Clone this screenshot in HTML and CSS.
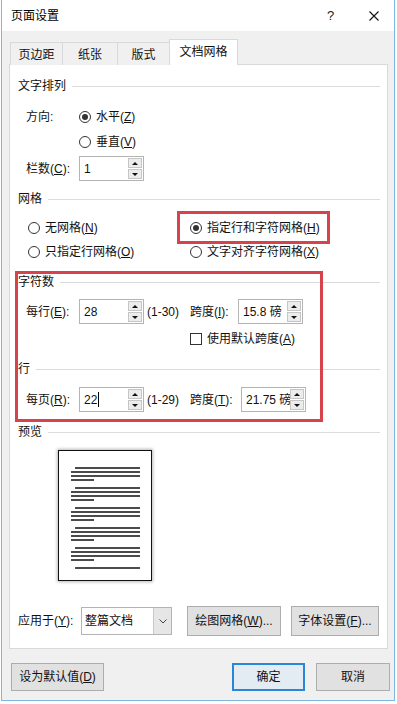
FILE: index.html
```html
<!DOCTYPE html>
<html>
<head>
	<meta charset="utf-8">
	<title>页面设置</title>
	<link rel="stylesheet" href="styles.css">
</head>
<body>
	<div class="dialog">
		<div class="titlebar">
			<span class="title">页面设置</span>
			<span class="help">?</span>
			<span class="close"><svg width="10" height="10" viewBox="0 0 10 10"><path d="M0.5 0.5L9.5 9.5M9.5 0.5L0.5 9.5" stroke="#111" stroke-width="1.1"/></svg></span>
		</div>
		<div class="body">
			<div class="tabs">
				<div class="tab t1">页边距</div>
				<div class="tab t2">纸张</div>
				<div class="tab t3">版式</div>
				<div class="tab t4 active">文档网格</div>
			</div>
			<div class="panel">
				<div class="hdr mt11"><span>文字排列</span><i></i></div>
				<div class="row h25 mt8 ind">
					<span class="lbl w53">方向:</span>
					<span class="radio on"></span><span>水平(<u>Z</u>)</span>
				</div>
				<div class="row h25 ind2">
					<span class="radio"></span><span>垂直(<u>V</u>)</span>
				</div>
				<div class="row h25 mt2 ind">
					<span class="lbl w53">栏数(<u>C</u>):</span>
					<div class="spin"><span class="spin-val">1</span><span class="spin-btns"><b class="up"></b><b class="dn"></b></span></div>
				</div>

				<div class="hdr mt8"><span>网格</span><i></i></div>
				<div class="grid mt7">
					<div class="row h24"><span class="radio"></span><span>无网格(<u>N</u>)</span></div>
					<div class="row h24"><span class="radio on"></span><span>指定行和字符网格(<u>H</u>)</span></div>
					<div class="row h24"><span class="radio"></span><span>只指定行网格(<u>O</u>)</span></div>
					<div class="row h24"><span class="radio"></span><span>文字对齐字符网格(<u>X</u>)</span></div>
				</div>

				<div class="hdr mt8"><span>字符数</span><i></i></div>
				<div class="row h25 mt7 ind">
					<span class="lbl w53">每行(<u>E</u>):</span>
					<div class="spin"><span class="spin-val">28</span><span class="spin-btns"><b class="up"></b><b class="dn"></b></span></div>
					<span class="range">(1-30)</span>
					<span class="lbl w48">跨度(<u>I</u>):</span>
					<div class="spin"><span class="spin-val">15.8 磅</span><span class="spin-btns"><b class="up"></b><b class="dn"></b></span></div>
				</div>
				<div class="row h24 mt3 ind3">
					<span class="check"></span><span>使用默认跨度(<u>A</u>)</span>
				</div>

				<div class="hdr mt8"><span>行</span><i></i></div>
				<div class="row h25 mt8 ind">
					<span class="lbl w53">每页(<u>R</u>):</span>
					<div class="spin"><span class="spin-val">22<em class="caret"></em></span><span class="spin-btns"><b class="up"></b><b class="dn"></b></span></div>
					<span class="range">(1-29)</span>
					<span class="lbl w51">跨度(<u>T</u>):</span>
					<div class="spin"><span class="spin-val">21.75 磅</span><span class="spin-btns"><b class="up"></b><b class="dn"></b></span></div>
				</div>

				<div class="hdr mt10"><span>预览</span><i></i></div>
				<div class="page">
					<svg width="92" height="129" viewBox="0 0 92 129">
						<g stroke="#111" stroke-width="1.6">
							<path d="M16 17H81M12 21H81M12 25H81M12 29H35"/>
							<path d="M16 37H81M12 41H81M12 45H81M12 49H35"/>
							<path d="M16 57H81M12 61H81M12 65H81M12 69H35"/>
							<path d="M16 77H81M12 81H81M12 85H81M12 89H35"/>
							<path d="M16 97H81M12 101H81M12 105H81M12 109H35"/>
							<path d="M16 117H81"/>
						</g>
					</svg>
				</div>

				<div class="row h30 mt25">
					<span class="lbl w63">应用于(<u>Y</u>):</span>
					<div class="select"><span class="select-val">整篇文档</span><span class="select-arrow"><svg width="8" height="5" viewBox="0 0 8 5"><path d="M0.5 0.5L4 4L7.5 0.5" fill="none" stroke="#444" stroke-width="1"/></svg></span></div>
					<span class="btn b-draw">绘图网格(<u>W</u>)...</span>
					<span class="btn b-font">字体设置(<u>F</u>)...</span>
				</div>

				<div class="mark mark-grid"></div>
				<div class="mark mark-count"></div>
			</div>
			<div class="footer">
				<span class="btn b-default">设为默认值(<u>D</u>)</span>
				<span class="btn b-ok">确定</span>
				<span class="btn b-cancel">取消</span>
			</div>
		</div>
	</div>
</body>
</html>
```

FILE: styles.css
```css
html,body{margin:0; padding:0; background:#fff;}
body{font-family:"Liberation Sans", "Noto Sans CJK SC", sans-serif; font-size:12px; line-height:16px; color:#111;}
u{text-decoration:underline; text-underline-offset:1px;}

.dialog{margin-left:1px; width:394px; height:701px; box-sizing:border-box; border:1px solid #7db6df; border-top:none; background:#f0f0f0;}
.titlebar{height:31px; background:#fff; display:flex; align-items:center; padding-left:9px;}
.title{color:#000;}
.help{margin-left:auto; width:6px; font-size:13px; color:#222;}
.close{margin-left:36px; margin-right:15px; display:flex;}

.body{padding:9px 6px 0 7px;}
.tabs{display:flex; align-items:flex-end; height:25px; margin-left:1px; margin-bottom:-1px; position:relative; z-index:1;}
.tab{height:23px; box-sizing:border-box; border:1px solid #d9d9d9; border-bottom:none; border-right:none; background:#f0f0f0; display:flex; align-items:center; justify-content:center; padding-top:1px;}
.t1{width:52px;}
.t2{width:55px;}
.t3{width:52px;}
.t4{width:69px;}
.tab.active{height:26px; background:#fff; border-right:1px solid #d9d9d9; padding-bottom:2px;}

.panel{position:relative; height:585px; box-sizing:border-box; border:1px solid #d9d9d9; background:#fff; padding:0 6px 0 8px;}
.hdr{height:20px; display:flex; align-items:center;}
.hdr i{flex:1; height:1px; background:#dcdcdc; margin-left:6px; margin-right:1px;}
.row{display:flex; align-items:center;}
.h24{height:24px;}
.h25{height:25px;}
.h30{height:30px;}
.mt2{margin-top:2px;}
.mt3{margin-top:3px;}
.mt7{margin-top:7px;}
.mt8{margin-top:8px;}
.mt10{margin-top:10px;}
.mt11{margin-top:11px;}
.mt25{margin-top:25px;}
.ind{padding-left:8px;}
.ind2{padding-left:61px;}
.ind3{padding-left:172px;}
.lbl{flex:none;}
.w48{width:48px;}
.w51{width:51px;}
.w53{width:53px;}
.w63{width:63px;}

.radio{flex:none; width:12px; height:12px; box-sizing:border-box; border:1px solid #333; border-radius:50%; background:#fff; margin-right:5px; display:flex; align-items:center; justify-content:center;}
.radio.on::after{content:""; width:6px; height:6px; border-radius:50%; background:#333;}
.check{flex:none; width:12px; height:12px; box-sizing:border-box; border:1px solid #333; background:#fff; margin-right:5px;}

.grid{display:grid; grid-template-columns:162px 1fr; padding-left:10px;}

.spin{flex:none; width:65px; height:25px; box-sizing:border-box; border:1px solid #b4b4b4; background:#fff; display:flex;}
.spin-val{flex:1; min-width:0; padding-left:4px; overflow:hidden; white-space:nowrap; display:flex; align-items:center;}
.spin-btns{flex:none; width:14px; display:flex; flex-direction:column; gap:1px; padding:1px 1px 1px 0;}
.spin-btns b{flex:1; box-sizing:border-box; border:1px solid #c6c6c6; background:#ececec; display:flex; align-items:center; justify-content:center;}
.spin-btns .up::before{content:""; border-left:3px solid transparent; border-right:3px solid transparent; border-bottom:3px solid #111;}
.spin-btns .dn::before{content:""; border-left:3px solid transparent; border-right:3px solid transparent; border-top:3px solid #111;}
.caret{display:inline-block; width:1px; height:15px; background:#000; margin-left:1px;}
.range{flex:none; width:43px; margin-left:3px;}

.page{margin-top:8px; margin-left:40px; width:94px; height:131px; box-sizing:border-box; border:1px solid #111; background:#fff; box-shadow:0 0 3px 1px #b8b8b8;}
.page svg{display:block;}

.select{flex:none; width:91px; height:28px; box-sizing:border-box; border:1px solid #b4b4b4; background:#fff; display:flex;}
.select-val{flex:1; padding-left:3px; display:flex; align-items:center;}
.select-arrow{width:17px; background:#e6e6e6; border-left:1px solid #c8c8c8; display:flex; align-items:center; justify-content:center;}

.btn{flex:none; box-sizing:border-box; border:1px solid #adadad; background:#e1e1e1; display:flex; align-items:center; justify-content:center;}
.b-draw{width:94px; height:30px; margin-left:15px;}
.b-font{width:88px; height:30px; margin-left:10px;}

.footer{display:flex; margin-top:14px;}
.b-default{width:93px; height:28px; margin-left:2px;}
.b-ok{width:73px; height:28px; margin-left:128px; border:2px solid #2a86d6; background:#e3ebf3;}
.b-cancel{width:74px; height:28px; margin-left:11px;}

.mark{position:absolute; border:3px solid #d7434d; box-sizing:border-box;}
.mark-grid{left:167px; top:146px; width:153px; height:33px;}
.mark-count{left:5px; top:206px; width:308px; height:151px;}
```
